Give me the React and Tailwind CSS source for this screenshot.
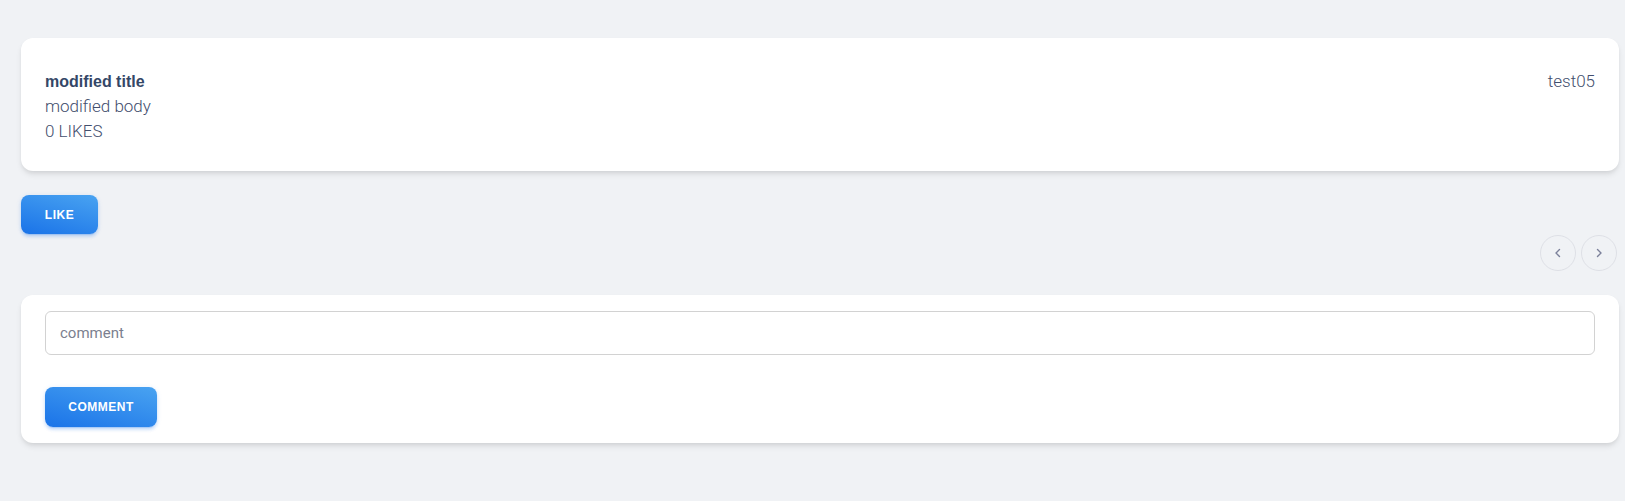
const Chevron = ({ dir }) => (
  <svg width="8" height="10" viewBox="0 0 8 10" fill="none" stroke="#7b809a" strokeWidth="1.4" strokeLinecap="round" strokeLinejoin="round">
    {dir === 'left' ? <path d="M5.5 1.5 2 5l3.5 3.5" /> : <path d="M2.5 1.5 6 5 2.5 8.5" />}
  </svg>
)

const btn =
  "flex items-center justify-center rounded-lg bg-[linear-gradient(195deg,#49a3f1,#1a73e8)] font-['Liberation_Sans',Arial,sans-serif] text-[12px] font-bold uppercase tracking-[0.5px] text-white shadow-[0_3px_3px_0_rgba(26,115,232,0.15),0_3px_1px_-2px_rgba(26,115,232,0.2),0_1px_5px_0_rgba(26,115,232,0.15)]"

export default function App() {
  return (
    <div className="min-h-screen bg-[#f0f2f5] pl-[21px] pr-[6px] pt-[38px] font-['Roboto','Liberation_Sans',sans-serif]">
      <div className="flex items-start justify-between rounded-xl bg-white px-6 pt-[31px] pb-[27px] shadow-[0_4px_6px_-1px_rgba(0,0,0,0.1),0_2px_4px_-1px_rgba(0,0,0,0.06)]">
        <div className="leading-[25px]">
          <h6 className="font-['Liberation_Sans',Arial,sans-serif] text-[16px] font-bold text-[#344767]">modified title</h6>
          <p className="text-[17px] font-light text-[#424e6d]">modified body</p>
          <p className="text-[17px] font-light text-[#424e6d]">0 LIKES</p>
        </div>
        <span className="text-[17px] leading-[25px] font-light text-[#424e6d]">test05</span>
      </div>

      <button className={`${btn} mt-6 h-[39px] w-[77px]`}>Like</button>

      <div className="mt-px mr-[2px] flex justify-end gap-[5px]">
        <button className="flex h-9 w-9 items-center justify-center rounded-full border border-[#dee0e6]">
          <Chevron dir="left" />
        </button>
        <button className="flex h-9 w-9 items-center justify-center rounded-full border border-[#dee0e6]">
          <Chevron dir="right" />
        </button>
      </div>

      <div className="mt-6 rounded-xl bg-white px-6 pt-4 pb-4 shadow-[0_4px_6px_-1px_rgba(0,0,0,0.1),0_2px_4px_-1px_rgba(0,0,0,0.06)]">
        <input
          placeholder="comment"
          className="block h-[44px] w-full rounded-md border border-[#d2d2d2] px-[14px] text-[15px] text-[#344767] outline-none placeholder:text-[#7b7f8f]"
        />
        <button className={`${btn} mt-8 h-10 w-[112px]`}>Comment</button>
      </div>
    </div>
  )
}
